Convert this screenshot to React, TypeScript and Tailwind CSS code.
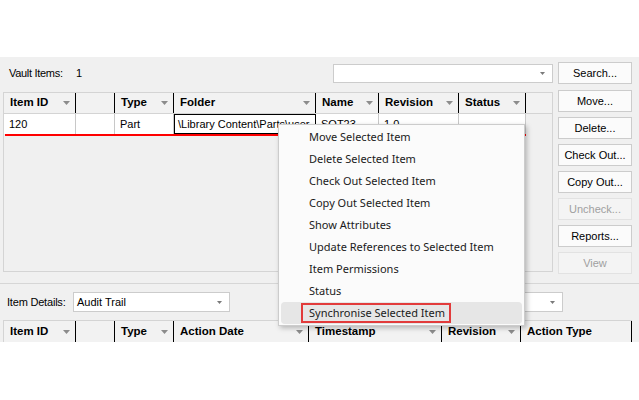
import React from 'react'

type Col = { label: string; w: number; arrow?: boolean }

const VAULT_COLS: Col[] = [
    { label: 'Item ID', w: 72, arrow: true },
    { label: '', w: 39 },
    { label: 'Type', w: 59, arrow: true },
    { label: 'Folder', w: 142, arrow: true },
    { label: 'Name', w: 63, arrow: true },
    { label: 'Revision', w: 80, arrow: true },
    { label: 'Status', w: 67, arrow: true },
]

const DETAIL_COLS: Col[] = [
    { label: 'Item ID', w: 72, arrow: true },
    { label: '', w: 39 },
    { label: 'Type', w: 59, arrow: true },
    { label: 'Action Date', w: 135, arrow: true },
    { label: 'Timestamp', w: 133, arrow: true },
    { label: 'Revision', w: 79, arrow: true },
    { label: 'Action Type', w: 111 },
]

const ROW = ['120', '', 'Part', '\\Library Content\\Parts\\user', 'SOT23', '1.0', '']

const SIDE_BUTTONS = [
    { label: 'Move...' },
    { label: 'Delete...' },
    { label: 'Check Out...' },
    { label: 'Copy Out...' },
    { label: 'Uncheck...', disabled: true },
    { label: 'Reports...' },
    { label: 'View', disabled: true },
]

const MENU = [
    'Move Selected Item',
    'Delete Selected Item',
    'Check Out Selected Item',
    'Copy Out Selected Item',
    'Show Attributes',
    'Update References to Selected Item',
    'Item Permissions',
    'Status',
]

function SortArrow() {
    return (
        <svg width="7" height="4" viewBox="0 0 7 4" className="shrink-0">
            <path d="M0 0h7L3.5 4z" fill="#8c8c8c" />
        </svg>
    )
}

function ComboArrow() {
    return (
        <svg width="5" height="3" viewBox="0 0 5 3" className="shrink-0">
            <path d="M0 0h5L2.5 3z" fill="#7a7a7a" />
        </svg>
    )
}

function Combo({ value, className }: { value?: string; className: string }) {
    return (
        <div className={`flex items-center justify-between border border-[#cccccc] bg-white pl-[3px] pr-[7px] ${className}`}>
            <span className="text-[11px] text-black">{value}</span>
            <ComboArrow />
        </div>
    )
}

function Button({ label, disabled }: { label: string; disabled?: boolean }) {
    return (
        <div
            className={
                disabled
                    ? 'flex h-[22px] w-[74px] items-center justify-center border border-[#e2e2e2] bg-[#f4f4f4] text-[11px] text-[#a0a0a0]'
                    : 'flex h-[22px] w-[74px] items-center justify-center border border-[#cccccc] bg-[#fbfbfb] text-[11px] text-black'
            }
        >
            {label}
        </div>
    )
}

function HeaderRow({ cols, className }: { cols: Col[]; className?: string }) {
    return (
        <div className={`flex h-[21px] bg-[#f2f2f2] ${className ?? ''}`}>
            {cols.map((c, i) => (
                <div
                    key={i}
                    className="flex shrink-0 items-center justify-between border-r border-black pl-[6px] pr-[5px] text-[11.5px] font-bold text-black"
                    style={{ width: c.w }}
                >
                    <span className="whitespace-nowrap">{c.label}</span>
                    {c.arrow && <SortArrow />}
                </div>
            ))}
        </div>
    )
}

function VaultGrid() {
    return (
        <div className="mt-[2px] h-[180px] w-[550px] border border-[#d4d4d4] bg-[#f0f0f0]">
            <HeaderRow cols={VAULT_COLS} className="border-b border-[#d4d4d4]" />
            <div className="flex h-[20px] bg-white" style={{ width: 522 }}>
                {ROW.map((v, i) => (
                    <div
                        key={i}
                        className={
                            i === 3
                                ? 'flex shrink-0 items-center overflow-hidden whitespace-nowrap border border-black pl-[3px] text-[11px] text-black'
                                : 'flex shrink-0 items-center overflow-hidden whitespace-nowrap border-r border-[#c8c8c8] pl-[5px] text-[11px] text-black'
                        }
                        style={{ width: VAULT_COLS[i].w }}
                    >
                        {v}
                    </div>
                ))}
            </div>
            <div className="ml-[1px] h-[2px] bg-[#ff0000]" style={{ width: 521 }} />
        </div>
    )
}

function ContextMenu() {
    return (
        <div className="absolute left-[278px] top-[67px] w-[247px] border border-[#cccccc] bg-[#fbfbfb] py-[1px] font-['Noto_Sans',sans-serif] text-[11px] text-[#1a1a1a] shadow-[2px_2px_5px_rgba(0,0,0,0.25)]">
            {MENU.map((m) => (
                <div key={m} className="flex h-[22px] items-center pl-[30px]">
                    {m}
                </div>
            ))}
            <div className="mx-[2px] flex h-[22px] items-center rounded-[4px] bg-[#e6e6e6] pl-[20px]">
                <span className="flex h-[20px] w-[150px] items-center border-2 border-[#e23b3b] pl-[6px]">
                    Synchronise Selected Item
                </span>
            </div>
        </div>
    )
}

export default function App() {
    return (
        <div className="h-[400px] w-[639px] overflow-hidden bg-white font-['Liberation_Sans',Arial,sans-serif]">
            <div className="h-[57px]" />
            <div className="relative h-[285px] overflow-hidden bg-[#f0f0f0]">
                {/* vault items toolbar */}
                <div className="mt-[5px] flex h-[22px] items-center">
                    <span className="w-[76px] shrink-0 pl-[9px] text-[11px] tracking-[-0.3px] text-black">Vault Items:</span>
                    <span className="text-[11px] text-black">1</span>
                    <div className="flex-1" />
                    <Combo className="h-[19px] w-[220px]" />
                    <div className="w-[5px]" />
                    <div className="mr-[7px]">
                        <Button label="Search..." />
                    </div>
                </div>

                {/* grid + actions */}
                <div className="mt-[6px] flex h-[184px]">
                    <div className="ml-[3px]">
                        <VaultGrid />
                    </div>
                    <div className="ml-[5px] flex flex-col gap-[5px]">
                        {SIDE_BUTTONS.map((b) => (
                            <Button key={b.label} label={b.label} disabled={b.disabled} />
                        ))}
                    </div>
                </div>

                <div className="mt-[9px] h-[1px] bg-[#d6d6d6]" />

                {/* item details */}
                <div className="mt-[8px] flex h-[20px] items-center">
                    <span className="w-[73px] shrink-0 pl-[7px] text-[11px] tracking-[-0.2px] text-black">Item Details:</span>
                    <Combo value="Audit Trail" className="h-[20px] w-[157px]" />
                    <div className="flex-1" />
                    <Combo className="mr-[76px] h-[20px] w-[230px]" />
                </div>

                <div className="ml-[3px] mt-[8px] w-[629px] border-l border-r border-t border-[#d4d4d4]">
                    <HeaderRow cols={DETAIL_COLS} className="h-[22px]" />
                </div>

                <ContextMenu />
            </div>
        </div>
    )
}
